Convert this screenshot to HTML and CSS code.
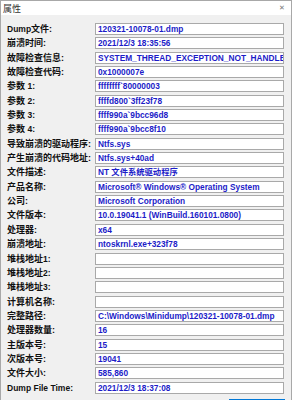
FILE: index.html
```html
<!DOCTYPE html>
<html lang="zh-CN">
<head>
    <meta charset="UTF-8">
    <title>属性</title>
    <link rel="stylesheet" href="styles.css">
</head>
<body>
    <div class="window">
        <div class="titlebar">
            <span class="title">属性</span>
            <span class="close">&#x2715;</span>
        </div>
        <div class="content">
            <div class="props">
                <div class="label"><span class="lat">Dump</span>文件:</div><div class="value">120321-10078-01.dmp</div>
                <div class="label">崩溃时间:</div><div class="value">2021/12/3 18:35:56</div>
                <div class="label">故障检查信息:</div><div class="value">SYSTEM_THREAD_EXCEPTION_NOT_HANDLED</div>
                <div class="label">故障检查代码:</div><div class="value">0x1000007e</div>
                <div class="label">参数 <span class="lat">1:</span></div><div class="value">ffffffff`80000003</div>
                <div class="label">参数 <span class="lat">2:</span></div><div class="value">ffffd800`3ff23f78</div>
                <div class="label">参数 <span class="lat">3:</span></div><div class="value">ffff990a`9bcc96d8</div>
                <div class="label">参数 <span class="lat">4:</span></div><div class="value">ffff990a`9bcc8f10</div>
                <div class="label">导致崩溃的驱动程序:</div><div class="value">Ntfs.sys</div>
                <div class="label">产生崩溃的代码地址:</div><div class="value">Ntfs.sys+40ad</div>
                <div class="label">文件描述:</div><div class="value">NT 文件系统驱动程序</div>
                <div class="label">产品名称:</div><div class="value">Microsoft® Windows® Operating System</div>
                <div class="label">公司:</div><div class="value">Microsoft Corporation</div>
                <div class="label">文件版本:</div><div class="value">10.0.19041.1 (WinBuild.160101.0800)</div>
                <div class="label">处理器:</div><div class="value">x64</div>
                <div class="label">崩溃地址:</div><div class="value">ntoskrnl.exe+323f78</div>
                <div class="label">堆栈地址<span class="lat">1:</span></div><div class="value"></div>
                <div class="label">堆栈地址<span class="lat">2:</span></div><div class="value"></div>
                <div class="label">堆栈地址<span class="lat">3:</span></div><div class="value"></div>
                <div class="label">计算机名称:</div><div class="value"></div>
                <div class="label">完整路径:</div><div class="value">C:\Windows\Minidump\120321-10078-01.dmp</div>
                <div class="label">处理器数量:</div><div class="value">16</div>
                <div class="label">主版本号:</div><div class="value">15</div>
                <div class="label">次版本号:</div><div class="value">19041</div>
                <div class="label">文件大小:</div><div class="value">585,860</div>
                <div class="label"><span class="lat">Dump File Time:</span></div><div class="value">2021/12/3 18:37:08</div>
            </div>
            <div class="buttons">
                <button class="btn"></button>
            </div>
        </div>
    </div>
</body>
</html>
```

FILE: styles.css
```css
html, body {
    margin: 0;
    padding: 0;
    background: #f0f0f0;
}
body {
    font-family: "Liberation Sans", "Noto Sans CJK SC", sans-serif;
}
.window {
    width: 292px;
    height: 400px;
    box-sizing: border-box;
    border: 1px solid #a8a8a8;
    border-bottom: none;
    overflow: hidden;
    background: #f0f0f0;
}
.titlebar {
    height: 14px;
    background: #fff;
    display: flex;
    align-items: center;
    justify-content: space-between;
    padding: 0 6px 0 2px;
}
.title {
    font-size: 9px;
    color: #333;
}
.close {
    font-size: 7px;
    color: #777;
}
.content {
    padding: 8px 6px 0 6px;
}
.props {
    display: grid;
    grid-template-columns: 88px 189px;
    grid-auto-rows: 14.35px;
    align-items: start;
}
.label {
    height: 12px;
    line-height: 12px;
    font-size: 9px;
    font-weight: bold;
    color: #111;
    white-space: nowrap;
}
.lat {
    font-size: 8.5px;
}
.value {
    height: 12px;
    box-sizing: border-box;
    border: 1px solid #a9a9a9;
    background: #fff;
    padding: 0 2px;
    line-height: 10px;
    font-size: 8.3px;
    font-weight: bold;
    color: #1c1cc8;
    white-space: nowrap;
    overflow: hidden;
}
.buttons {
    display: flex;
    justify-content: flex-end;
    margin-top: 3px;
}
.btn {
    width: 56px;
    height: 20px;
    border: 2px solid #0078d7;
    background: #e5f1fb;
}
```
